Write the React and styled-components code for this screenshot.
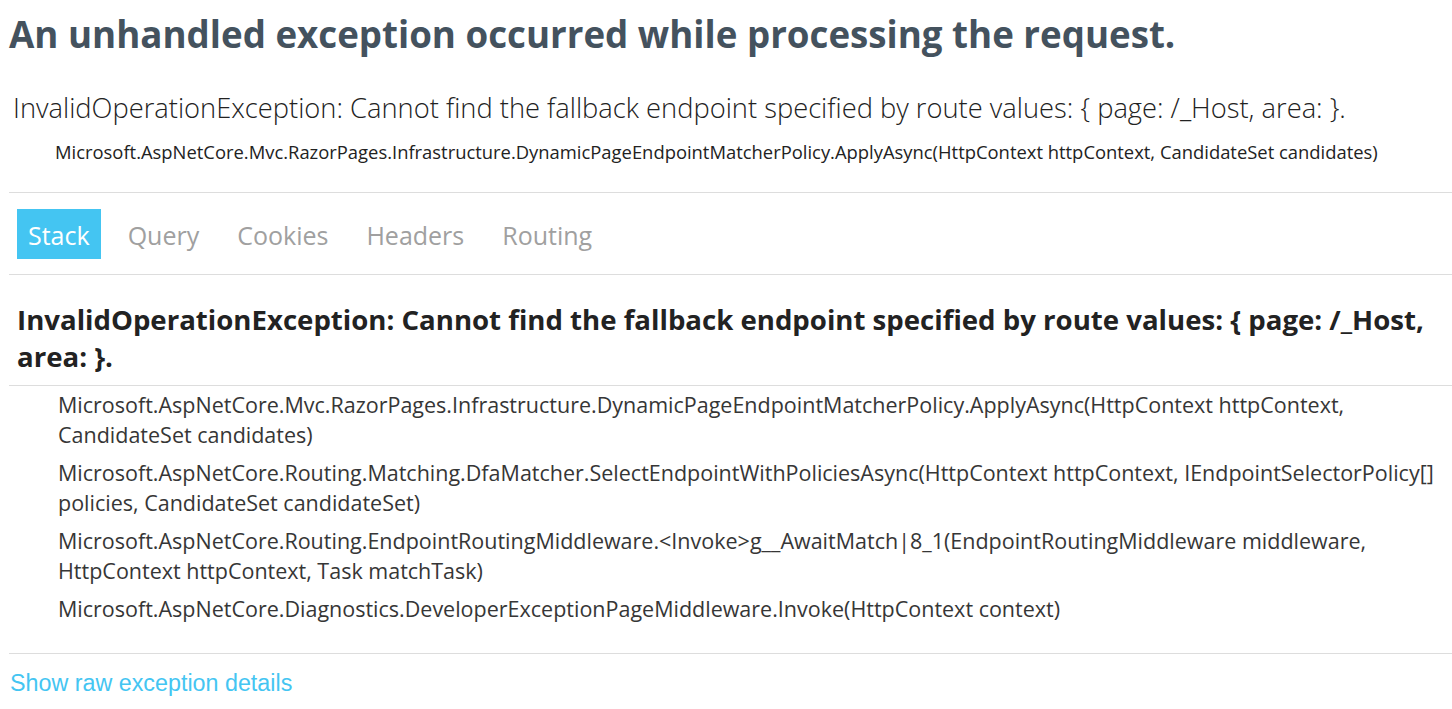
import styled, { createGlobalStyle } from "styled-components";

const GlobalStyle = createGlobalStyle`
  html, body {
    margin: 0;
    padding: 0;
    background: #fff;
  }
  body {
    font-family: "Open Sans", "Noto Sans", Arial, sans-serif;
    color: #222;
    padding-left: 9px;
  }
`;

const Title = styled.h1`
  margin: 12px 0 0 0;
  font-size: 36.7px;
  line-height: 44px;
  font-weight: 700;
  color: #44525e;
`;

const TitleError = styled.div`
  margin-top: 34px;
  padding-left: 4px;
  font-size: 27.3px;
  line-height: 36px;
  font-weight: 300;
  color: #222;
`;

const Location = styled.div`
  margin: 13px 0 27px 46px;
  font-size: 18.4px;
  line-height: 26px;
  color: #222;
`;

const TabBar = styled.ul`
  list-style: none;
  margin: 0;
  padding: 16px 0 15px 0;
  display: flex;
  gap: 16px;
  border-top: 1px solid #ddd;
  border-bottom: 1px solid #ddd;
`;

const Tab = styled.li`
  height: 50px;
  line-height: 52px;
  padding: 0 11px;
  margin-left: ${(p) => (p.$first ? "8px" : "0")};
  font-size: 25px;
  color: ${(p) => (p.$selected ? "#fff" : "#a0a0a0")};
  background: ${(p) => (p.$selected ? "#44c5f2" : "transparent")};
  cursor: pointer;
`;

const StackError = styled.div`
  padding: 26px 7px 10px 8px;
  border-bottom: 1px solid #ddd;
`;

const Details = styled.h2`
  margin: 0;
  font-size: 27.6px;
  line-height: 37px;
  font-weight: 700;
  color: #222;
`;

const FrameList = styled.ul`
  list-style: none;
  margin: 0 0 25px 0;
  padding: 0;
`;

const Frame = styled.li`
  margin-left: 46px;
`;

const FrameTitle = styled.h3`
  margin: 0;
  padding: 4px 3px;
  font-size: 21.5px;
  line-height: 30px;
  font-weight: 400;
  color: #363636;
`;

const RawBlock = styled.div`
  border-top: 1px solid #ddd;
  padding-top: 16px;
`;

const RawButton = styled.button`
  font-family: "Liberation Sans", Arial, sans-serif;
  font-size: 23.3px;
  color: #44c5f2;
  background: transparent;
  border: 0;
  padding: 0;
  margin-left: 1px;
  cursor: pointer;
  text-align: left;
`;

const message =
  "InvalidOperationException: Cannot find the fallback endpoint specified by route values: { page: /_Host, area: }.";

const frames = [
  "Microsoft.AspNetCore.Mvc.RazorPages.Infrastructure.DynamicPageEndpointMatcherPolicy.ApplyAsync(HttpContext httpContext, CandidateSet candidates)",
  "Microsoft.AspNetCore.Routing.Matching.DfaMatcher.SelectEndpointWithPoliciesAsync(HttpContext httpContext, IEndpointSelectorPolicy[] policies, CandidateSet candidateSet)",
  "Microsoft.AspNetCore.Routing.EndpointRoutingMiddleware.<Invoke>g__AwaitMatch|8_1(EndpointRoutingMiddleware middleware, HttpContext httpContext, Task matchTask)",
  "Microsoft.AspNetCore.Diagnostics.DeveloperExceptionPageMiddleware.Invoke(HttpContext context)",
];

const tabs = ["Stack", "Query", "Cookies", "Headers", "Routing"];

export default function App() {
  return (
    <>
      <GlobalStyle />
      <Title>An unhandled exception occurred while processing the request.</Title>
      <TitleError>{message}</TitleError>
      <Location>{frames[0]}</Location>
      <TabBar>
        {tabs.map((t, i) => (
          <Tab key={t} $first={i === 0} $selected={i === 0}>
            {t}
          </Tab>
        ))}
      </TabBar>
      <div>
        <StackError>
          <Details>{message}</Details>
        </StackError>
        <FrameList>
          {frames.map((f) => (
            <Frame key={f}>
              <FrameTitle>{f}</FrameTitle>
            </Frame>
          ))}
        </FrameList>
      </div>
      <RawBlock>
        <RawButton>Show raw exception details</RawButton>
      </RawBlock>
    </>
  );
}
